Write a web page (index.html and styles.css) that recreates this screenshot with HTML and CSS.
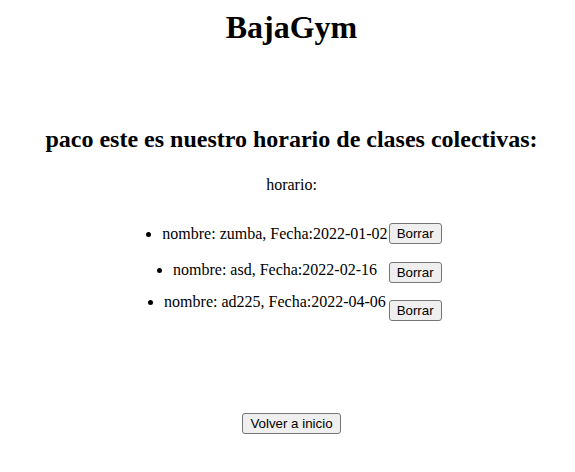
FILE: index.html
```html
<!DOCTYPE html>
<html lang="es">
<head>
<meta charset="utf-8">
<title>BajaGym</title>
<link rel="stylesheet" href="styles.css">
</head>
<body>
<div class="page">
  <h1 class="title">BajaGym</h1>
  <h2 class="subtitle">paco este es nuestro horario de clases colectivas:</h2>
  <p class="label">horario:</p>
  <ul class="schedule">
    <li class="row row-1">
      <span class="item">nombre: zumba, Fecha:2022-01-02</span>
      <button class="btn" type="button">Borrar</button>
    </li>
    <li class="row row-2">
      <span class="item">nombre: asd, Fecha:2022-02-16</span>
      <button class="btn" type="button">Borrar</button>
    </li>
    <li class="row row-3">
      <span class="item">nombre: ad225, Fecha:2022-04-06</span>
      <button class="btn" type="button">Borrar</button>
    </li>
  </ul>
  <div class="back">
    <button class="btn" type="button">Volver a inicio</button>
  </div>
</div>
</body>
</html>
```

FILE: styles.css
```css
html, body {
  margin: 0;
  padding: 0;
  background: #ffffff;
}

body {
  font-family: "Liberation Serif", "Times New Roman", serif;
  font-size: 16px;
  color: #000000;
}

.page {
  padding: 9px 4px 0 12px;
  text-align: center;
}

.title {
  margin: 0;
  font-size: 32px;
  font-weight: bold;
}

.subtitle {
  margin: 80px 0 0;
  font-size: 24px;
  font-weight: bold;
}

.label {
  margin: 23px 0 0;
}

.schedule {
  list-style: none;
  margin: 31px 0 0;
  padding: 0 0 0 21px;
  display: grid;
  grid-template-columns: auto auto;
  grid-template-rows: 36px 32px auto;
  justify-content: center;
  column-gap: 1px;
}

.row {
  display: contents;
}

.item {
  display: list-item;
  list-style: disc outside;
  justify-self: center;
  align-self: start;
  line-height: normal;
}

.btn {
  font-family: "Liberation Sans", Arial, sans-serif;
  font-size: 13.333px;
  color: #000000;
  background: #efefef;
  border: 1px solid #767676;
  border-radius: 3px;
  padding: 2px 7px;
  line-height: normal;
  margin: 0;
}

.schedule .btn {
  align-self: start;
  justify-self: start;
}

.row-1 .btn { margin-top: -2px; }
.row-2 .btn { margin-top: 1px; }
.row-3 .btn { margin-top: 7px; }

.back {
  margin-top: 92px;
  padding-left: 0;
}
```
